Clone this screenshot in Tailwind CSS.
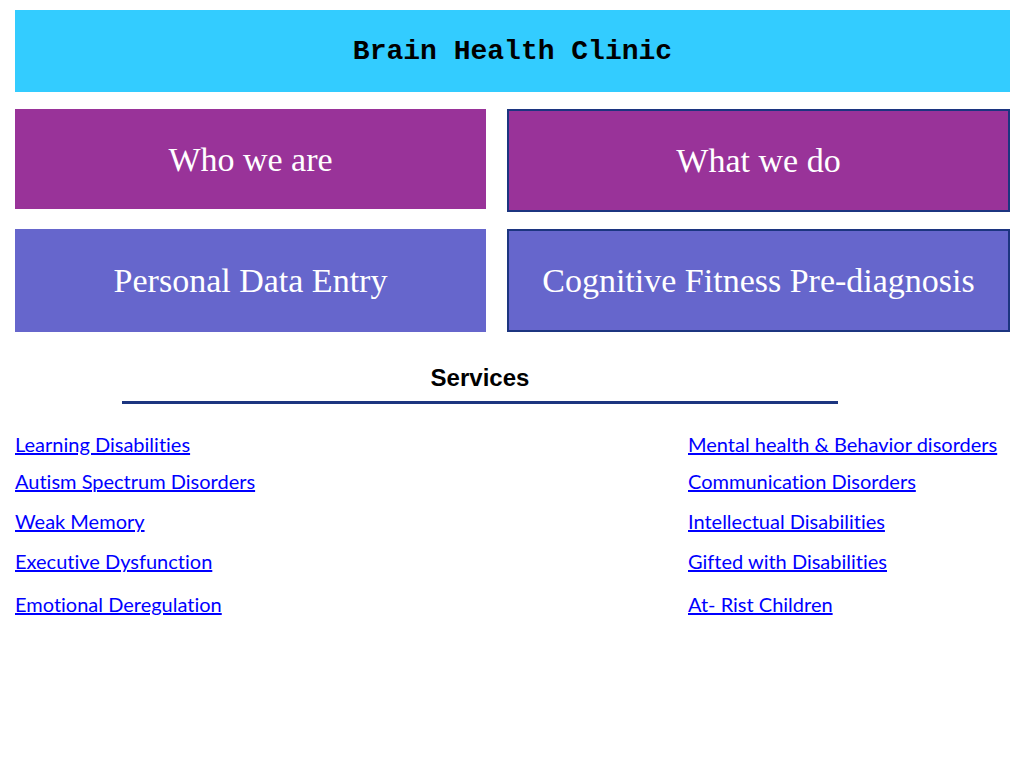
<!DOCTYPE html>
<html lang="en">
<head>
<meta charset="utf-8">
<meta name="viewport" content="width=device-width, initial-scale=1">
<title>Brain Health Clinic</title>
<script src="https://cdn.jsdelivr.net/npm/@tailwindcss/browser@4"></script>
</head>
<body class="bg-white pl-[15px] pr-[14px] pt-[10px] text-black">
<header class="flex items-center justify-center bg-[#33ccff] pt-[21px] pb-[19px]">
<h1 class="font-['Liberation_Mono',monospace] text-[28px] leading-[42px] font-bold">Brain Health Clinic</h1>
</header>
<nav class="mt-[17px] grid grid-cols-[471fr_503fr] items-start gap-x-[21px] gap-y-[17px] text-center font-['Liberation_Serif',serif] text-[34px] leading-[40px] text-white">
<a href="#who" class="bg-[#993399] pt-[31px] pb-[29px]">Who we are</a>
<a href="#what" class="border-2 border-[#1c3580] bg-[#993399] pt-[30px] pb-[29px]">What we do</a>
<a href="#data" class="bg-[#6666cc] pt-[32px] pb-[31px]">Personal Data Entry</a>
<a href="#fitness" class="border-2 border-[#1c3580] bg-[#6666cc] pt-[30px] pb-[29px]">Cognitive Fitness Pre-diagnosis</a>
</nav>
<main>
<h2 class="mt-[30px] mr-[172px] ml-[107px] border-b-3 border-[#1c3580] pb-[7px] text-center font-['Liberation_Sans',sans-serif] text-[24px] leading-[32px] font-bold">Services</h2>
<div class="mt-[25px] flex justify-between font-['Lato',sans-serif] text-[20px] leading-[30px] text-[#0000ff] underline decoration-2 underline-offset-1 [font-variant-ligatures:none]">
<ul class="grid grid-rows-[37px_40px_40px_43px_40px]">
<li><a href="#learning">Learning Disabilities</a></li>
<li><a href="#autism">Autism Spectrum Disorders</a></li>
<li><a href="#memory">Weak Memory</a></li>
<li><a href="#executive">Executive Dysfunction</a></li>
<li><a href="#emotional">Emotional Deregulation</a></li>
</ul>
<ul class="grid w-[322px] grid-rows-[37px_40px_40px_43px_40px] whitespace-nowrap">
<li><a href="#mental">Mental health &amp; Behavior disorders</a></li>
<li><a href="#communication">Communication Disorders</a></li>
<li><a href="#intellectual">Intellectual Disabilities</a></li>
<li><a href="#gifted">Gifted with Disabilities</a></li>
<li><a href="#children">At- Rist Children</a></li>
</ul>
</div>
</main>
</body>
</html>
